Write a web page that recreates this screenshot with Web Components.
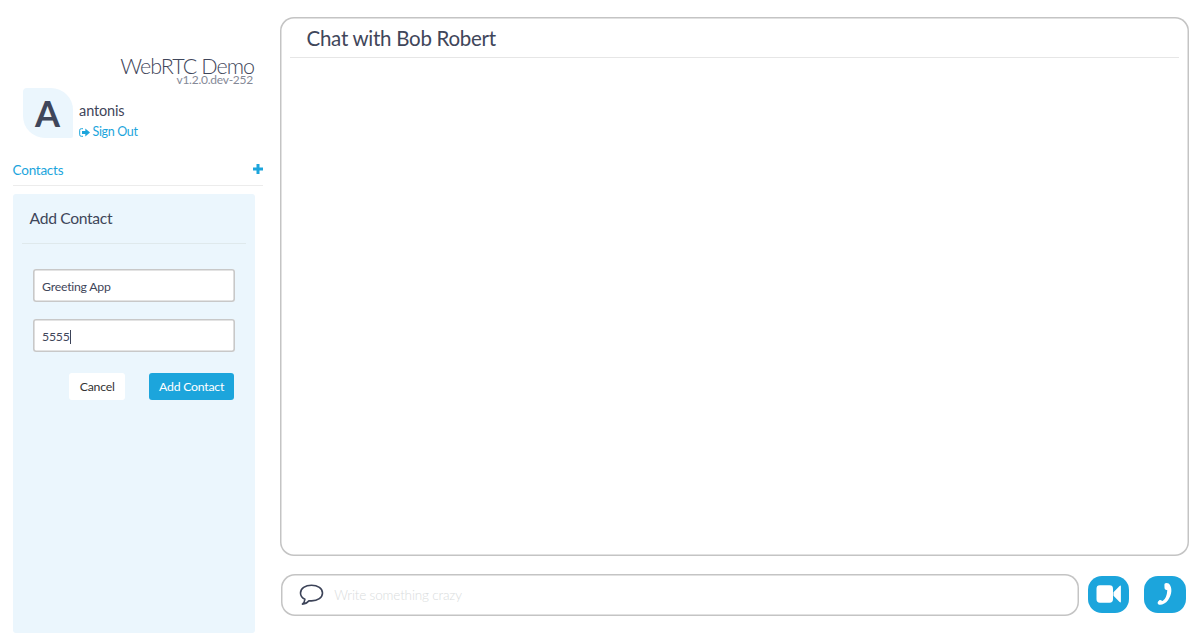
<!DOCTYPE html>
<html lang="en">
<head>
<meta charset="utf-8">
<title>WebRTC Demo</title>
<style>
html,body{margin:0;height:100%;overflow:hidden;background:#fff}
body{font-family:Lato,"Open Sans",sans-serif;color:#3f465a}
</style>
</head>
<body>
<demo-app>
  <app-sidebar slot="side">
    <app-brand version="v1.2.0.dev-252">WebRTC Demo</app-brand>
    <user-card initial="A" name="antonis"></user-card>
    <contacts-bar>Contacts</contacts-bar>
    <contact-form></contact-form>
  </app-sidebar>
  <chat-panel slot="main">Chat with Bob Robert</chat-panel>
  <message-bar slot="main">
    <call-button slot="calls"><svg width="26" height="20" viewBox="0 0 26 20"><path fill="#fff" d="M3.900 1.300h9.700a3.400 3.400 0 0 1 3.400 3.400v10.600a3.400 3.400 0 0 1-3.400 3.400H3.900a3.400 3.400 0 0 1-3.400-3.400V4.700A3.400 3.400 0 0 1 3.900 1.300zM17.500 8.300L23.600 2q1.300-1 1.300.5v15q0 1.500-1.300.5l-6.100-6.300z"/></svg></call-button>
    <call-button slot="calls"><svg width="18" height="24" viewBox="0 0 18 24"><path fill="#fff" d="M9.300 1.300Q11 .6 12.700 1.600C16.800 5.400 16 13 12 18.200 9.200 21.900 4.600 23.700 2.200 22.200Q.9 21.200 2.100 19.500L3.600 18.100Q4.500 17.600 5.500 18.400L6.600 19Q10.800 16.500 11.300 8.300L9.700 7.700Q8.500 7.200 8.500 5.800L8.400 2.700Q8.400 1.700 9.300 1.300z"/></svg></call-button>
  </message-bar>
</demo-app>
<script>
const define = (name, html) => customElements.define(name, class extends HTMLElement {
  constructor() {
    super();
    const t = document.createElement('template');
    t.innerHTML = typeof html === 'function' ? html(this) : html;
    this.attachShadow({mode: 'open'}).append(t.content.cloneNode(true));
  }
});

define('demo-app', `<style>
:host{display:grid;grid-template-columns:280px 1fr;height:638px;box-sizing:border-box}
main{display:flex;flex-direction:column;padding:17px 11px 0 0}
</style><slot name="side"></slot><main><slot name="main"></slot></main>`);

define('app-sidebar', `<style>
:host{display:flex;flex-direction:column;padding:54px 17px 5px 12.600px;box-sizing:border-box;height:638px}
</style><slot></slot>`);

define('app-brand', el => `<style>
:host{display:block;text-align:right;height:30px;padding:4px 8px 0 0}
.name{font-size:21.500px;line-height:16px;font-weight:300;letter-spacing:-.980px;white-space:nowrap;padding-right:1px}
.ver{font-size:12px;line-height:12px;letter-spacing:-.25px;padding-right:2px;color:#858997}
</style><div class="name"><slot></slot></div><div class="ver">${el.getAttribute('version')}</div>`);

define('user-card', el => `<style>
:host{display:flex;align-items:flex-start;height:72px;padding-left:10px;gap:6.500px}
.avatar{width:50px;height:50px;border-radius:4px 22px 2px 22px;background:#ebf6fd;font-size:36px;font-weight:700;line-height:51px;text-align:center}
.name{font-size:14.500px;line-height:18px;margin-top:14px;letter-spacing:-.15px}
.out{display:flex;align-items:center;gap:2.500px;color:#1ca5dc;font-size:12.500px;line-height:16px;margin-top:4px;letter-spacing:-.35px}
</style><div class="avatar">${el.getAttribute('initial')}</div><div><div class="name">${el.getAttribute('name')}</div>
<div class="out"><svg width="11" height="9" viewBox="0 0 11 9"><path d="M4 .7H2.300Q.7.7.7 2.200v4.600Q.7 8.300 2.300 8.300H4" fill="none" stroke="currentColor"/><path d="M3 3h3.300V.4L11 4.500 6.300 8.600V6H3z" fill="currentColor"/></svg><span>Sign Out</span></div></div>`);

define('contacts-bar', `<style>
:host{display:flex;justify-content:space-between;align-items:flex-start;box-sizing:border-box;height:26px;width:250px;border-bottom:1px solid #ececec;color:#1ca5dc;font-size:13.500px;line-height:20px;letter-spacing:-.25px}
svg{margin-top:4px}
</style><span><slot></slot></span><svg width="10" height="10" viewBox="0 0 10 10"><path d="M5 0v10M0 5h10" stroke="currentColor" stroke-width="3"/></svg>`);

define('contact-form', `<style>
:host{display:block;flex:1;box-sizing:border-box;width:242px;margin-top:8px;padding:0 9px;border-radius:3px;background:#ebf6fd}
h2{margin:0 0 25px;padding:0 8px;height:49px;line-height:49px;border-bottom:1px solid #dfe9ec;font-size:15.700px;font-weight:400;letter-spacing:-.35px}
form-field{margin:0 11px 17px}
.actions{display:flex;justify-content:flex-end;gap:24px;padding:4px 11.700px 0 0}
</style><h2>Add Contact</h2><form-field>Greeting App</form-field><form-field focused>5555</form-field>
<div class="actions"><push-button>Cancel</push-button><push-button primary>Add Contact</push-button></div>`);

define('form-field', `<style>
:host{display:flex;align-items:center;box-sizing:border-box;height:33px;padding:2px 10px 0 9.500px;box-shadow:inset 0 0 0 1.600px #c8c8c8;border-radius:3px;background:#fff;font-size:12.300px;line-height:16px;letter-spacing:-.25px}
i{display:none;width:1px;height:14px;background:#3c4358}
:host([focused]) i{display:block}
</style><slot></slot><i></i>`);

define('push-button', `<style>
:host{display:flex;align-items:center;justify-content:center;box-sizing:border-box;width:56px;height:27px;border-radius:3px;background:#fff;color:#333;font-size:12.300px;letter-spacing:-.25px;white-space:nowrap}
:host([primary]){width:84.700px;background:#1ca5dc;color:#fff}
</style><slot></slot>`);

define('chat-panel', `<style>
:host{display:block;box-sizing:border-box;height:539px;padding:2px 10px;box-shadow:inset 0 0 0 1.500px #c4c4c4;border-radius:14px}
h1{margin:0;padding:0 16.500px;height:38px;line-height:39px;border-bottom:1px solid #e6e6e6;font-size:20.500px;font-weight:400;letter-spacing:-.27px}
</style><h1><slot></slot></h1>`);

define('message-bar', `<style>
:host{display:flex;align-items:flex-start;margin-top:18px;padding:0 3px 0 1.200px}
.field{display:flex;align-items:center;box-sizing:border-box;width:797.800px;height:41.500px;padding-left:18px;gap:10px;box-shadow:inset 0 0 0 1.500px #c4c4c4;border-radius:14px;color:#d9dcdd;font-size:13.500px;font-weight:300;letter-spacing:-.15px}
.calls{display:flex;gap:15px;padding:1.500px 0 0 8.800px}
</style><div class="field"><svg width="25" height="22" viewBox="0 0 25 22"><path d="M12.500 1.200C6.200 1.200 1.500 4.600 1.500 9c0 2.700 1.700 5 4.400 6.300-.1 2-.8 3.400-2.500 4.800 2.900-.1 4.900-1.200 6.500-3.300l2.600.1c6.300 0 11-3.500 11-7.900s-4.700-7.800-11-7.800z" fill="none" stroke="#3c4358" stroke-width="1.600" stroke-linejoin="round"/></svg><span>Write something crazy</span></div><div class="calls"><slot name="calls"></slot></div>`);

define('call-button', `<style>
:host{display:flex;align-items:center;justify-content:center;width:41.700px;height:37.500px;border-radius:14px;background:#1ca5dc}
</style><slot></slot>`);
</script>
</body>
</html>
